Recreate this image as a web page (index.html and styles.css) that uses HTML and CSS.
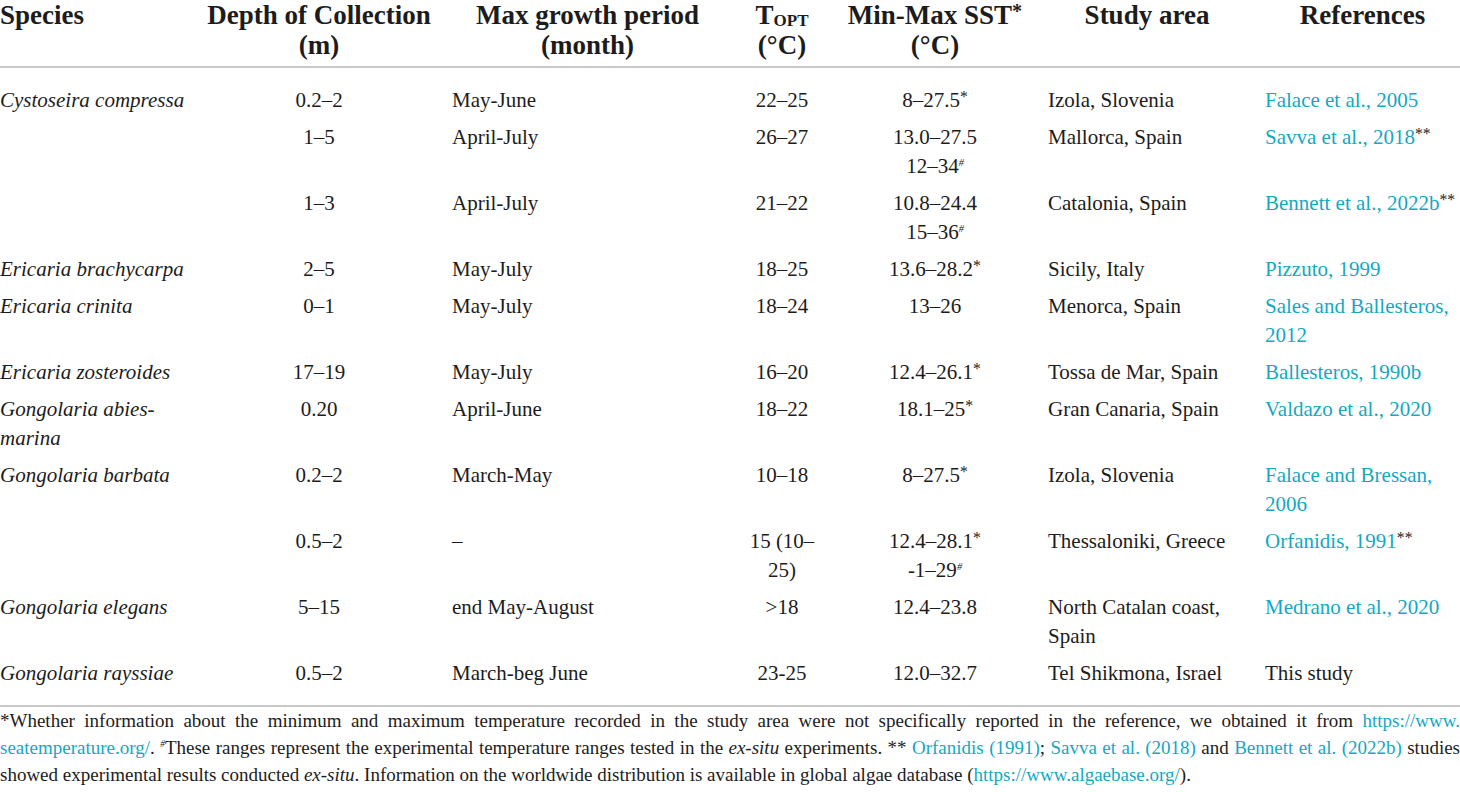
FILE: index.html
```html
<!DOCTYPE html>
<html>
<head>
    <title>Table - Gongolaria rayssiae</title>
    <link rel="stylesheet" href="styles.css">
</head>
<body>
    <div class="tabel-wrap">
        <table class="tabel">
            <colgroup>
                <col class="c-species">
                <col class="c-depth">
                <col class="c-growth">
                <col class="c-topt">
                <col class="c-sst">
                <col class="c-area">
                <col class="c-ref">
            </colgroup>
            <thead>
                <tr>
                    <th class="kiri">Species</th>
                    <th>Depth of Collection (m)</th>
                    <th>Max growth period (month)</th>
                    <th>T<sub>OPT</sub> (°C)</th>
                    <th>Min-Max SST<sup>*</sup> (°C)</th>
                    <th>Study area</th>
                    <th>References</th>
                </tr>
            </thead>
            <tbody>
                <tr>
                    <td class="sp">Cystoseira compressa</td>
                    <td class="tengah">0.2–2</td>
                    <td>May-June</td>
                    <td class="tengah">22–25</td>
                    <td class="tengah">8–27.5<sup>*</sup></td>
                    <td>Izola, Slovenia</td>
                    <td><a href="#">Falace et al., 2005</a></td>
                </tr>
                <tr>
                    <td class="sp"></td>
                    <td class="tengah">1–5</td>
                    <td>April-July</td>
                    <td class="tengah">26–27</td>
                    <td class="tengah">13.0–27.5<br>12–34<sup class="pagar">#</sup></td>
                    <td>Mallorca, Spain</td>
                    <td><a href="#">Savva et al., 2018</a><sup>**</sup></td>
                </tr>
                <tr>
                    <td class="sp"></td>
                    <td class="tengah">1–3</td>
                    <td>April-July</td>
                    <td class="tengah">21–22</td>
                    <td class="tengah">10.8–24.4<br>15–36<sup class="pagar">#</sup></td>
                    <td>Catalonia, Spain</td>
                    <td><a href="#">Bennett et al., 2022b</a><sup>**</sup></td>
                </tr>
                <tr>
                    <td class="sp">Ericaria brachycarpa</td>
                    <td class="tengah">2–5</td>
                    <td>May-July</td>
                    <td class="tengah">18–25</td>
                    <td class="tengah">13.6–28.2<sup>*</sup></td>
                    <td>Sicily, Italy</td>
                    <td><a href="#">Pizzuto, 1999</a></td>
                </tr>
                <tr>
                    <td class="sp">Ericaria crinita</td>
                    <td class="tengah">0–1</td>
                    <td>May-July</td>
                    <td class="tengah">18–24</td>
                    <td class="tengah">13–26</td>
                    <td>Menorca, Spain</td>
                    <td><a href="#">Sales and Ballesteros, 2012</a></td>
                </tr>
                <tr>
                    <td class="sp">Ericaria zosteroides</td>
                    <td class="tengah">17–19</td>
                    <td>May-July</td>
                    <td class="tengah">16–20</td>
                    <td class="tengah">12.4–26.1<sup>*</sup></td>
                    <td>Tossa de Mar, Spain</td>
                    <td><a href="#">Ballesteros, 1990b</a></td>
                </tr>
                <tr>
                    <td class="sp">Gongolaria abies-marina</td>
                    <td class="tengah">0.20</td>
                    <td>April-June</td>
                    <td class="tengah">18–22</td>
                    <td class="tengah">18.1–25<sup>*</sup></td>
                    <td>Gran Canaria, Spain</td>
                    <td><a href="#">Valdazo et al., 2020</a></td>
                </tr>
                <tr>
                    <td class="sp">Gongolaria barbata</td>
                    <td class="tengah">0.2–2</td>
                    <td>March-May</td>
                    <td class="tengah">10–18</td>
                    <td class="tengah">8–27.5<sup>*</sup></td>
                    <td>Izola, Slovenia</td>
                    <td><a href="#">Falace and Bressan, 2006</a></td>
                </tr>
                <tr>
                    <td class="sp"></td>
                    <td class="tengah">0.5–2</td>
                    <td>–</td>
                    <td class="tengah">15 (10–25)</td>
                    <td class="tengah">12.4–28.1<sup>*</sup><br>-1–29<sup class="pagar">#</sup></td>
                    <td>Thessaloniki, Greece</td>
                    <td><a href="#">Orfanidis, 1991</a><sup>**</sup></td>
                </tr>
                <tr>
                    <td class="sp">Gongolaria elegans</td>
                    <td class="tengah">5–15</td>
                    <td>end May-August</td>
                    <td class="tengah">&gt;18</td>
                    <td class="tengah">12.4–23.8</td>
                    <td>North Catalan coast, Spain</td>
                    <td><a href="#">Medrano et al., 2020</a></td>
                </tr>
                <tr>
                    <td class="sp">Gongolaria rayssiae</td>
                    <td class="tengah">0.5–2</td>
                    <td>March-beg June</td>
                    <td class="tengah">23-25</td>
                    <td class="tengah">12.0–32.7</td>
                    <td>Tel Shikmona, Israel</td>
                    <td>This study</td>
                </tr>
            </tbody>
        </table>

        <!-- catatan kaki tabel -->
        <p class="catatan">*Whether information about the minimum and maximum temperature recorded in the study area were not specifically reported in the reference, we obtained it from <a href="#">https://www.</a><wbr><a href="#">seatemperature.org/</a>. <sup class="pagar">#</sup>These ranges represent the experimental temperature ranges tested in the <i>ex-situ</i> experiments. ** <a href="#">Orfanidis (1991)</a>; <a href="#">Savva et al. (2018)</a> and <a href="#">Bennett et al. (2022b)</a> studies showed experimental results conducted <i>ex-situ</i>. Information on the worldwide distribution is available in global algae database (<a href="#">https://www.algaebase.org/</a>).</p>
    </div>
</body>
</html>
```

FILE: styles.css
```css
/* halaman */
body {
    margin: 0;
    background-color: #fff;
    color: #1c1c1c;
    font-family: "Liberation Serif", "Times New Roman", serif;
}

.tabel-wrap {
    width: 1460px;
}

/* tabel */
.tabel {
    width: 1460px;
    border-collapse: collapse;
    table-layout: fixed;
}

.c-species { width: 196px; }
.c-depth   { width: 247px; }
.c-growth  { width: 290px; }
.c-topt    { width: 99px; }
.c-sst     { width: 207px; }
.c-area    { width: 217px; }
.c-ref     { width: 204px; }

th {
    font-size: 27px;
    font-weight: bold;
    line-height: 30px;
    text-align: center;
    vertical-align: top;
    padding: 0 10px 6px 9px;
    border-bottom: 2px solid #c9c9c9;
}

th.kiri {
    text-align: left;
}

th sub {
    font-size: 17px;
    vertical-align: -2px;
    line-height: 0;
}

td {
    font-size: 21px;
    line-height: 29px;
    text-align: left;
    vertical-align: top;
    padding: 4px 10px 4px 9px;
}

th:first-child,
td:first-child {
    padding-left: 0;
}

th:last-child,
td:last-child {
    padding-right: 0;
}

td.sp {
    font-style: italic;
}

td.tengah {
    text-align: center;
}

tbody tr:first-child td {
    padding-top: 18px;
}

tbody tr:last-child td {
    padding-bottom: 17px;
    border-bottom: 2px solid #c9c9c9;
}

sup {
    font-size: 0.75em;
    line-height: 0;
    vertical-align: 0.3em;
}

sup.pagar {
    font-style: italic;
    font-size: 0.5em;
    vertical-align: 0.7em;
}

a {
    color: #14a8c2;
    text-decoration: none;
}

/* catatan kaki */
.catatan {
    margin: 0;
    font-size: 19px;
    line-height: 27px;
    text-align: justify;
}
```
